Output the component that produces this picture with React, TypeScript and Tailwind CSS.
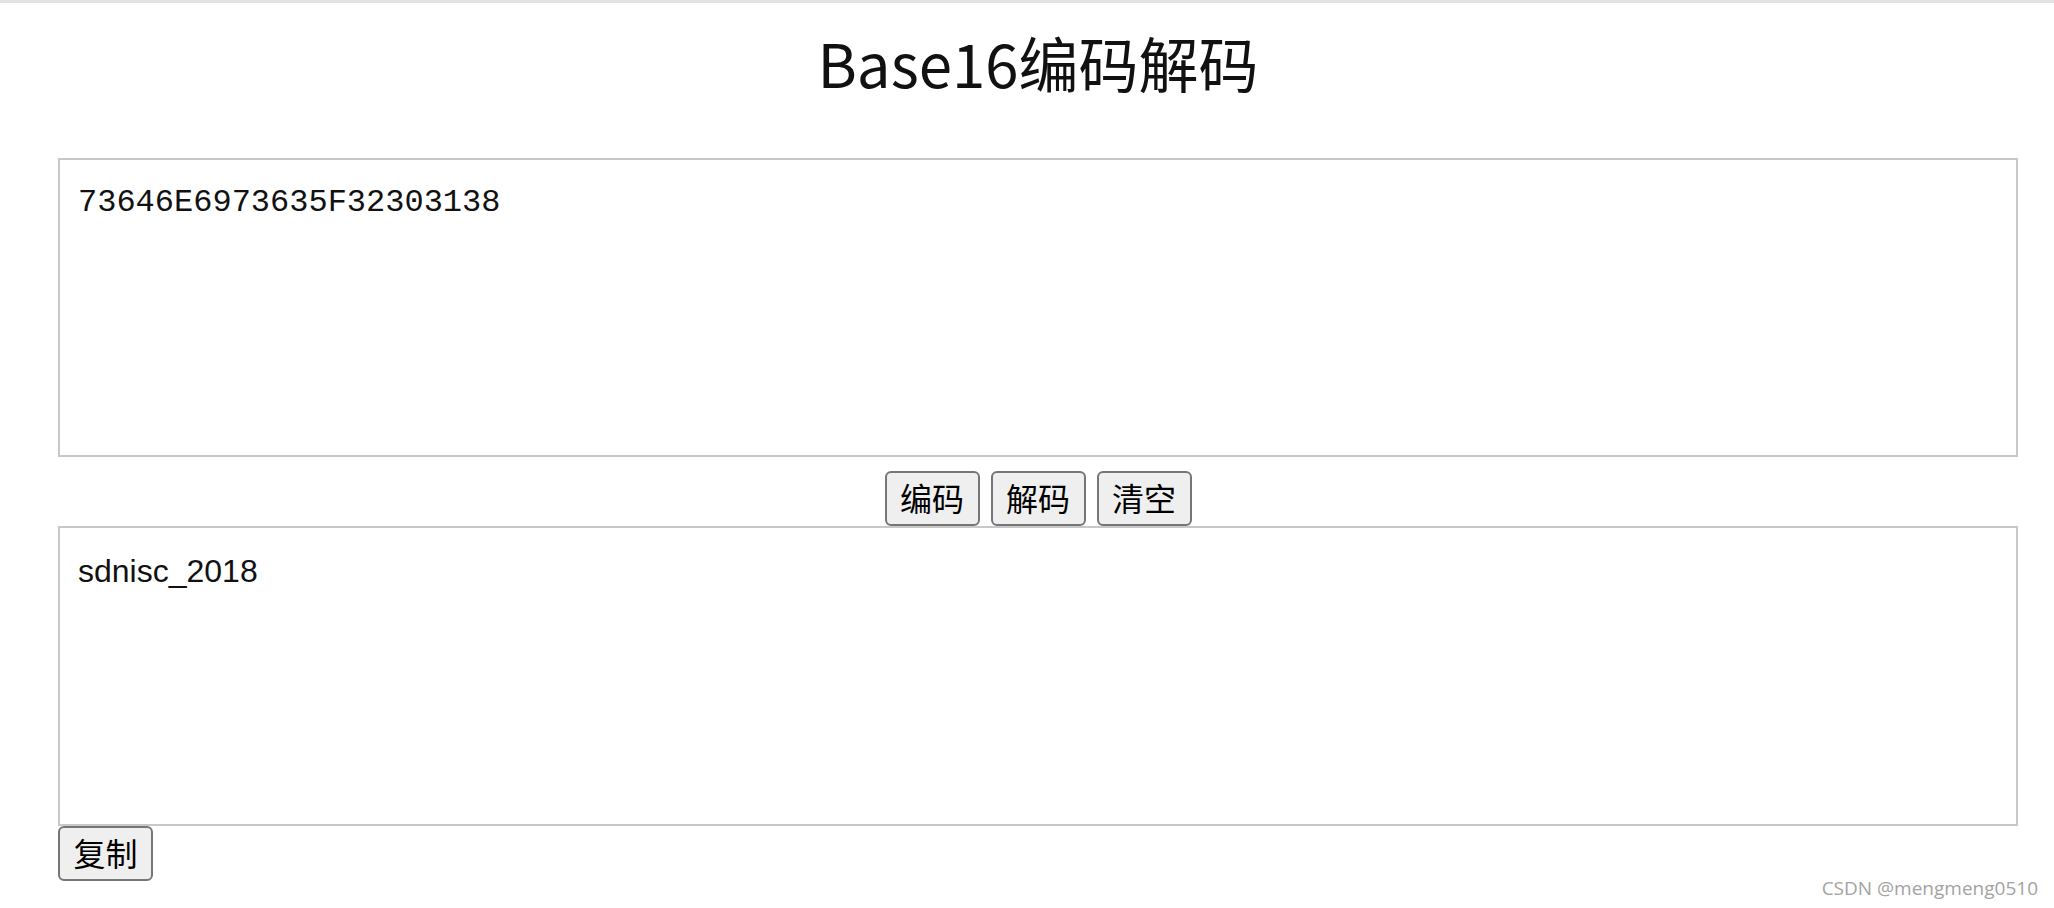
import React from "react";

const btn =
  "h-[55px] w-[95px] rounded-[6px] border-2 border-[#767676] bg-[#efefef] pb-[3px] text-[32px] leading-none text-black [font-family:'Noto_Sans_CJK_SC',sans-serif]";

export default function App() {
  return (
    <div className="relative h-[908px] w-full overflow-hidden bg-white">
      <div className="h-[3px] w-full bg-[#e2e2e2]" />
      <div className="pl-[58px] pr-[36px]">
        <h1 className="pt-[20px] text-center text-[60px] leading-[1.3] font-normal text-[#111] [font-family:'Noto_Sans_CJK_SC',sans-serif]">
          Base16编码解码
        </h1>
        <textarea
          readOnly
          defaultValue="73646E6973635F32303138"
          className="mt-[57px] block h-[299px] w-full resize-none border-2 border-[#c8c8c8] px-[18px] pt-[19px] text-[32px] leading-normal text-[#111] outline-none [font-family:'Liberation_Mono',monospace]"
        />
        <div className="flex justify-center gap-[11px] pt-[14px]">
          <button className={btn}>编码</button>
          <button className={btn}>解码</button>
          <button className={btn}>清空</button>
        </div>
        <textarea
          readOnly
          defaultValue="sdnisc_2018"
          className="block h-[300px] w-full resize-none border-2 border-[#c8c8c8] px-[18px] pt-[19px] text-[32px] leading-normal text-[#111] outline-none [font-family:'Liberation_Sans',sans-serif]"
        />
        <button className={btn}>复制</button>
      </div>
      <div className="absolute right-[16px] bottom-[6px] text-[19px] text-[#a3a3a3] [font-family:'Open_Sans',sans-serif]">
        CSDN @mengmeng0510
      </div>
    </div>
  );
}
